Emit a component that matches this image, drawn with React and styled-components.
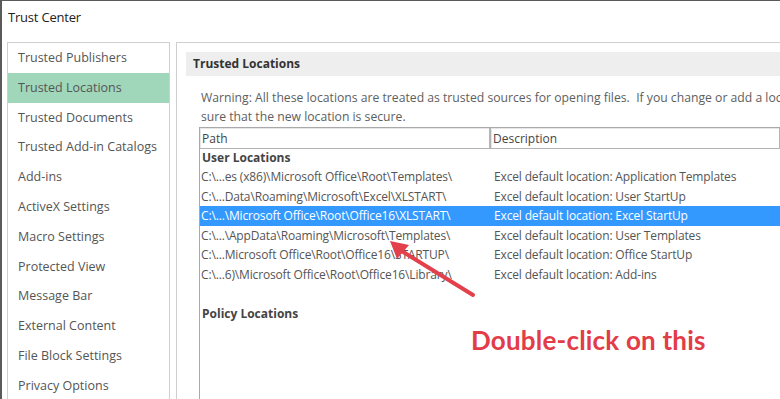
import styled, { createGlobalStyle } from "styled-components";

const Global = createGlobalStyle`
  html, body {
    margin: 0;
    padding: 0;
    background: #fff;
    overflow: hidden;
  }
`;

const Window = styled.div`
  position: relative;
  width: 780px;
  height: 399px;
  box-sizing: border-box;
  border-top: 1px solid #5a5a5a;
  border-left: 2px solid #5a5a5a;
  background: #fff;
  overflow: hidden;
  font-family: "Open Sans", "Noto Sans", sans-serif;
  font-size: 12px;
  color: #444;
`;

const Title = styled.div`
  height: 32px;
  line-height: 32px;
  padding-left: 6px;
  font-size: 13px;
  color: #222;
  letter-spacing: -0.2px;
`;

const Body = styled.div`
  display: flex;
  gap: 6px;
  padding: 9px 0 0 5px;
  height: 400px;
`;

const Sidebar = styled.div`
  width: 161px;
  flex-shrink: 0;
  border: 1px solid #cfcfcf;
  border-bottom: none;
`;

const NavItem = styled.div`
  height: 29.8px;
  line-height: 29.8px;
  padding-left: 10px;
  font-size: 12.5px;
  color: #555;
  background: ${(p) => (p.$active ? "#a0d6ba" : "transparent")};
  white-space: nowrap;
`;

const Main = styled.div`
  flex: 1;
  border-top: 1px solid #cfcfcf;
  border-left: 1px solid #cfcfcf;
  padding: 9px 0 0 9px;
  min-width: 0;
`;

const SectionBar = styled.div`
  height: 24px;
  line-height: 24px;
  background: #eeeeee;
  padding-left: 7px;
  font-weight: 700;
  font-size: 12px;
  color: #333;
  white-space: nowrap;
`;

const Warning = styled.div`
  margin: 12px 0 0 15px;
  line-height: 19px;
  font-size: 12.2px;
  color: #5e5e5e;
  white-space: nowrap;
`;

const Table = styled.div`
  margin: 1px 0 0 13px;
  border-left: 1px solid #a9a9a9;
  border-top: 1px solid #a9a9a9;
  height: 300px;
`;

const HeaderRow = styled.div`
  display: grid;
  grid-template-columns: 290px 1fr;
  height: 20px;
`;

const HeaderCell = styled.div`
  border: 1px solid #b4b4b4;
  border-left: ${(p) => (p.$first ? "none" : "1px solid #b4b4b4")};
  border-top: none;
  box-shadow: inset 1px 1px 0 #e6e6e6;
  line-height: 19px;
  padding: 1px 0 0 2px;
  color: #444;
`;

const GroupHead = styled.div`
  height: 19px;
  line-height: 20px;
  padding-left: 2px;
  margin-top: ${(p) => p.$gap || 0}px;
  font-weight: 700;
  color: #444;
`;

const Row = styled.div`
  display: grid;
  grid-template-columns: 293px 1fr;
  height: 19.5px;
  line-height: 19.5px;
  padding-left: 1px;
  color: ${(p) => (p.$selected ? "#fff" : "#555")};
  background: ${(p) => (p.$selected ? "#3399ff" : "transparent")};
  white-space: nowrap;
  letter-spacing: -0.15px;
`;

const Overlay = styled.svg`
  position: absolute;
  left: 0;
  top: 0;
  pointer-events: none;
`;

const Callout = styled.div`
  position: absolute;
  left: 469px;
  top: 323px;
  font-family: Lato, "Open Sans", sans-serif;
  font-weight: 700;
  font-size: 26px;
  letter-spacing: 0.2px;
  color: #e23c48;
  white-space: nowrap;
`;

const navItems = [
  "Trusted Publishers",
  "Trusted Locations",
  "Trusted Documents",
  "Trusted Add-in Catalogs",
  "Add-ins",
  "ActiveX Settings",
  "Macro Settings",
  "Protected View",
  "Message Bar",
  "External Content",
  "File Block Settings",
  "Privacy Options",
];

const locations = [
  ["C:\\...es (x86)\\Microsoft Office\\Root\\Templates\\", "Excel default location: Application Templates"],
  ["C:\\...Data\\Roaming\\Microsoft\\Excel\\XLSTART\\", "Excel default location: User StartUp"],
  ["C:\\...\\Microsoft Office\\Root\\Office16\\XLSTART\\", "Excel default location: Excel StartUp"],
  ["C:\\...\\AppData\\Roaming\\Microsoft\\Templates\\", "Excel default location: User Templates"],
  ["C:\\...Microsoft Office\\Root\\Office16\\STARTUP\\", "Excel default location: Office StartUp"],
  ["C:\\...6)\\Microsoft Office\\Root\\Office16\\Library\\", "Excel default location: Add-ins"],
];

export default function App() {
  return (
    <>
      <Global />
      <Window>
        <Title>Trust Center</Title>
        <Body>
          <Sidebar>
            {navItems.map((n) => (
              <NavItem key={n} $active={n === "Trusted Locations"}>
                {n}
              </NavItem>
            ))}
          </Sidebar>
          <Main>
            <SectionBar>Trusted Locations</SectionBar>
            <Warning>
              Warning: All these locations are treated as trusted sources for opening files.&nbsp; If you change or add a location, make
              <br />
              sure that the new location is secure.
            </Warning>
            <Table>
              <HeaderRow>
                <HeaderCell $first>Path</HeaderCell>
                <HeaderCell>Description</HeaderCell>
              </HeaderRow>
              <GroupHead>User Locations</GroupHead>
              {locations.map(([path, desc], i) => (
                <Row key={path} $selected={i === 2}>
                  <span>{path}</span>
                  <span>{desc}</span>
                </Row>
              ))}
              <GroupHead $gap={20}>Policy Locations</GroupHead>
            </Table>
          </Main>
        </Body>
        <Overlay width="780" height="399" viewBox="0 0 780 399">
          <line x1="471" y1="294" x2="398" y2="249" stroke="#e2404a" strokeWidth="4" strokeLinecap="round" />
          <polygon points="388,240 407,244 395,258" fill="#e2404a" />
        </Overlay>
        <Callout>Double-click on this</Callout>
      </Window>
    </>
  );
}
